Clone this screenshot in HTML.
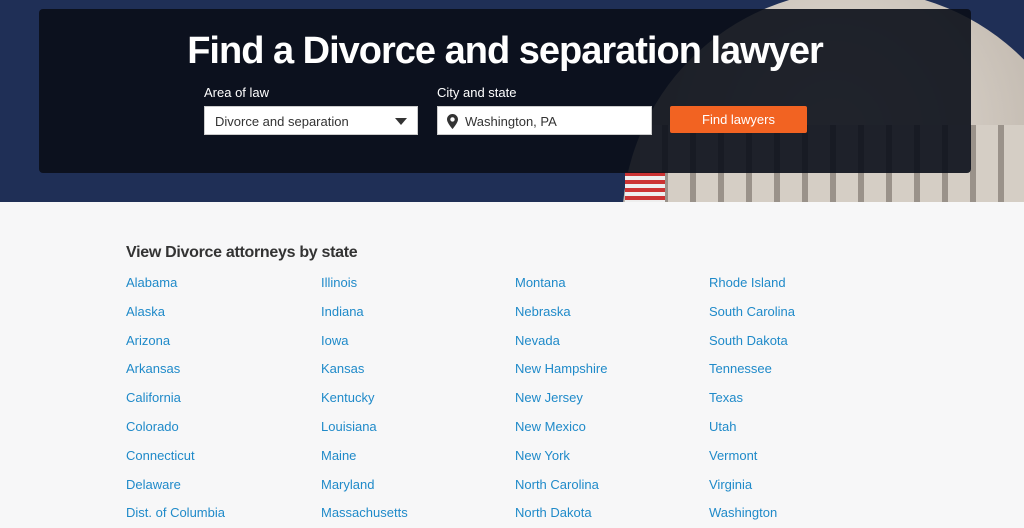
<!DOCTYPE html>
<html><head><style>
*{margin:0;padding:0;box-sizing:border-box}
body{width:1024px;height:520px;overflow:hidden;background:#f7f7f8;font-family:"Liberation Sans",sans-serif}
.hero{position:absolute;left:0;top:0;width:1024px;height:202px;background:#1f2f56;overflow:hidden}
.dome{position:absolute;left:622px;top:-10px;width:470px;height:470px;border-radius:50%;background:radial-gradient(circle at 45% 30%,#e8e2da,#bdb4aa 60%,#8e857c);}
.cols{position:absolute;left:640px;top:125px;width:400px;height:77px;background:repeating-linear-gradient(90deg,#d5cec5 0 22px,#9a928a 22px 28px)}
.flag{position:absolute;left:625px;top:172px;width:40px;height:30px;background:repeating-linear-gradient(180deg,#c33 0 4px,#eee 4px 8px)}
.card{position:absolute;left:39px;top:9px;width:932px;height:164px;background:rgba(10,14,24,0.9);border-radius:4px}
h1{position:absolute;left:0;width:1010px;top:30px;text-align:center;color:#fff;font-size:38px;font-weight:bold;letter-spacing:-1px}
.lbl{position:absolute;top:85px;color:#fff;font-size:13px}
.box{position:absolute;top:106px;height:29px;background:#fff;border:1px solid #ccc;font-size:13px;color:#333;padding:7px 0 0 10px}
.btn{position:absolute;left:670px;top:106px;width:137px;height:27px;background:#f26322;border-radius:2px;color:#fff;font-size:13px;text-align:center;line-height:27px}
h2{position:absolute;left:126px;top:244px;font-size:16px;font-weight:bold;color:#333;letter-spacing:-0.3px}
.col{position:absolute;top:269px;font-size:13px;color:#1f8ac9;line-height:28.8px}
</style></head><body>
<div class="hero"><div class="dome"></div><div class="cols"></div><div class="flag"></div>
<div class="card"></div>
<h1>Find a Divorce and separation lawyer</h1>
<div class="lbl" style="left:204px">Area of law</div>
<div class="lbl" style="left:437px">City and state</div>
<div class="box" style="left:204px;width:214px">Divorce and separation<span style="position:absolute;right:10px;top:11px;border-left:6px solid transparent;border-right:6px solid transparent;border-top:7px solid #333"></span></div>
<div class="box" style="left:437px;width:215px;padding-left:27px"><svg style="position:absolute;left:9px;top:7px" width="11" height="15" viewBox="0 0 11 15"><path d="M5.5 0C2.5 0 0 2.4 0 5.4 0 9 5.5 15 5.5 15S11 9 11 5.4C11 2.4 8.5 0 5.5 0zm0 7.6a2.2 2.2 0 1 1 0-4.4 2.2 2.2 0 0 1 0 4.4z" fill="#333"/></svg>Washington, PA</div>
<div class="btn">Find lawyers</div>
</div>
<h2>View Divorce attorneys by state</h2>
<div class="col" style="left:126px">Alabama<br>Alaska<br>Arizona<br>Arkansas<br>California<br>Colorado<br>Connecticut<br>Delaware<br>Dist. of Columbia</div>
<div class="col" style="left:321px">Illinois<br>Indiana<br>Iowa<br>Kansas<br>Kentucky<br>Louisiana<br>Maine<br>Maryland<br>Massachusetts</div>
<div class="col" style="left:515px">Montana<br>Nebraska<br>Nevada<br>New Hampshire<br>New Jersey<br>New Mexico<br>New York<br>North Carolina<br>North Dakota</div>
<div class="col" style="left:709px">Rhode Island<br>South Carolina<br>South Dakota<br>Tennessee<br>Texas<br>Utah<br>Vermont<br>Virginia<br>Washington</div>
</body></html>
